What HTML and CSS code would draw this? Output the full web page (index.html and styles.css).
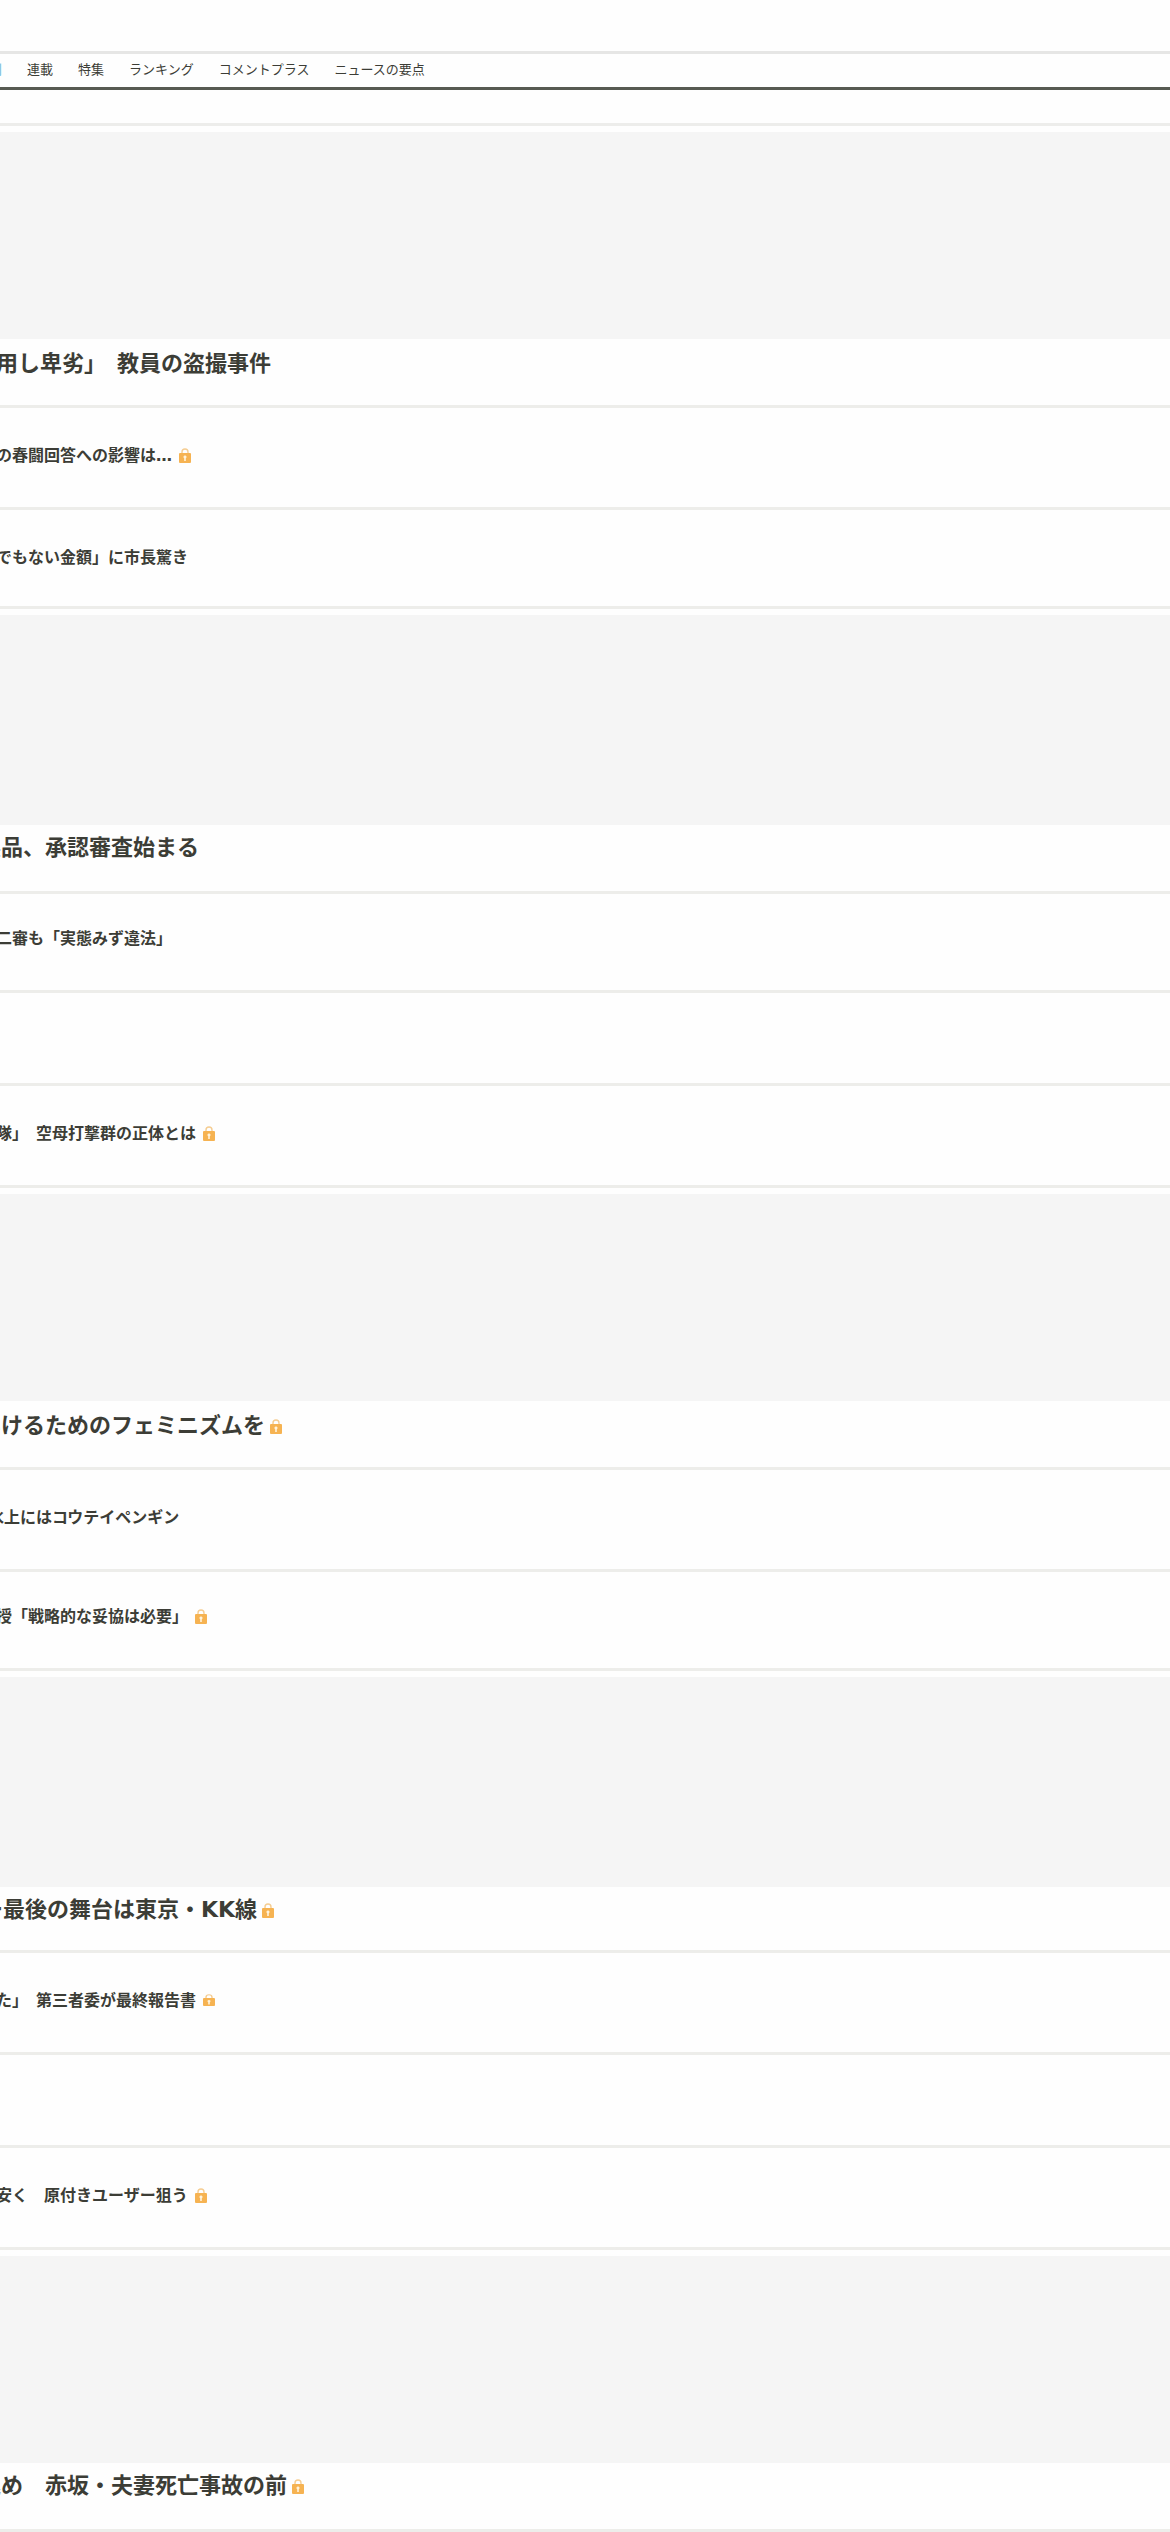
FILE: index.html
```html
<!DOCTYPE html>
<html lang="ja">
<head>
<meta charset="utf-8">
<meta name="viewport" content="width=device-width">
<title>ニュース</title>
<link rel="stylesheet" href="styles.css">
</head>
<body>
<svg class="defs" aria-hidden="true">
  <symbol id="lock" viewBox="0 0 12 15">
    <path d="M3 7V4a3 3 0 0 1 6 0v3" fill="none" stroke="#f5cd92" stroke-width="1.4"/>
    <rect y="5" width="12" height="10" rx="1" fill="#f6b352"/>
    <path d="M6 7.500a1.500 1.500 0 0 1 .8 2.800V13H5.200v-2.700A1.500 1.500 0 0 1 6 7.500z" fill="#fff3dc"/>
  </symbol>
</svg>
<header class="header"></header>
<nav class="nav">
  <a class="current" href="#">刊</a>
  <a href="#">連載</a>
  <a href="#">特集</a>
  <a href="#">ランキング</a>
  <a href="#">コメントプラス</a>
  <a href="#">ニュースの要点</a>
</nav>
<div class="spacer"></div>
<main>
  <section class="group">
    <div class="media"></div>
    <h2 class="headline shift-small"><a href="#">用し卑劣」　教員の盗撮事件</a></h2>
    <h3 class="row"><a href="#">の春闘回答への影響は…</a><svg class="lock"><use href="#lock"/></svg></h3>
    <h3 class="row row-short"><a href="#">でもない金額」に市長驚き</a></h3>
  </section>
  <section class="group">
    <div class="media media-tall"></div>
    <h2 class="headline headline-high"><a href="#">製品、承認審査始まる</a></h2>
    <h3 class="row row-high"><a href="#">二審も「実態みず違法」</a></h3>
    <div class="row row-empty"></div>
    <h3 class="row"><a href="#">隊」　空母打撃群の正体とは</a><svg class="lock"><use href="#lock"/></svg></h3>
  </section>
  <section class="group">
    <div class="media"></div>
    <h2 class="headline"><a href="#">いけるためのフェミニズムを</a><svg class="lock"><use href="#lock"/></svg></h2>
    <h3 class="row shift-medium"><a href="#">氷上にはコウテイペンギン</a></h3>
    <h3 class="row row-high"><a href="#">授「戦略的な妥協は必要」</a><svg class="lock"><use href="#lock"/></svg></h3>
  </section>
  <section class="group">
    <div class="media media-tall"></div>
    <h2 class="headline headline-high headline-short shift-large"><a href="#">ー最後の舞台は東京・KK線</a><svg class="lock"><use href="#lock"/></svg></h2>
    <h3 class="row"><a href="#">た」　第三者委が最終報告書</a><svg class="lock lock-small" viewBox="0 0 12 15" preserveAspectRatio="none"><use href="#lock"/></svg></h3>
    <div class="row row-empty"></div>
    <h3 class="row"><a href="#">安く　原付きユーザー狙う</a><svg class="lock"><use href="#lock"/></svg></h3>
  </section>
  <section class="group">
    <div class="media"></div>
    <h2 class="headline headline-high"><a href="#">込め　赤坂・夫妻死亡事故の前</a><svg class="lock"><use href="#lock"/></svg></h2>
  </section>
</main>
</body>
</html>
```
FILE: styles.css
```css
* {
  box-sizing: border-box;
}

body {
  margin: 0;
  overflow-x: hidden;
  background: #fefefe;
  color: #3c3d36;
  font-family: "DejaVu Sans", "Noto Sans CJK JP", sans-serif;
}

a {
  color: inherit;
  text-decoration: none;
}

.defs {
  display: none;
}

.header {
  height: 54px;
  border-bottom: 3px solid #e6e6e5;
}

.nav {
  display: flex;
  gap: 25px;
  height: 36px;
  margin-left: -11px;
  border-bottom: 3px solid #575a52;
  font-size: 13px;
  line-height: 32px;
  white-space: nowrap;
}

.nav .current {
  color: #6fbcd8;
}

.spacer {
  height: 36px;
  border-bottom: 3px solid #ededeb;
}

.group {
  padding-top: 6px;
}

.media {
  height: 207px;
  background: #f5f5f5;
}

.media-tall {
  height: 210px;
}

.headline,
.row {
  display: flex;
  align-items: center;
  margin: 0;
  border-bottom: 3px solid #ededea;
  font-weight: bold;
  white-space: nowrap;
}

.headline {
  gap: 5px;
  padding: 9px 0 25px;
  font-size: 22px;
  line-height: 32px;
  text-indent: -21px;
}

.headline-high {
  padding: 7px 0 27px;
}

.headline-short {
  padding-bottom: 24px;
}

.row {
  gap: 7px;
  padding: 36px 0 39px;
  font-size: 16px;
  line-height: 24px;
  text-indent: -4px;
}

.row-short {
  padding-bottom: 36px;
}

.row-high {
  padding-top: 33px;
}

.row-empty {
  height: 93px;
}

.shift-small {
  text-indent: -4px;
}

.shift-medium {
  text-indent: -12px;
}

.shift-large {
  text-indent: -19px;
}

.lock {
  flex: none;
  width: 12px;
  height: 15px;
}

.row .lock {
  margin-bottom: 2px;
}

.lock-small {
  height: 12px;
}
```
